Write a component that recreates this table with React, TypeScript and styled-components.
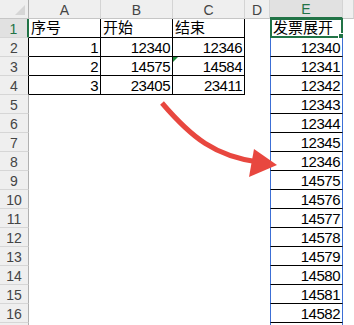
import styled, { createGlobalStyle } from "styled-components";

const GlobalStyle = createGlobalStyle`
  * { box-sizing: border-box; }
  html, body { margin: 0; padding: 0; background: #fff; }
  body { font-family: "Liberation Sans", "Noto Sans CJK SC", sans-serif; }
`;

const GREEN = "#217346";
const BLUE = "#3c6fd6";
const HEAD_BG = "#efefef";
const HEAD_ACTIVE = "#e1e1e1";

const Sheet = styled.div`
  position: relative;
  display: grid;
  grid-template-columns: 29px 72px 72px 72px 25px 73px 1fr;
  grid-template-rows: 19px repeat(17, 19px);
  width: 354px;
  height: 325px;
  overflow: hidden;
  background: #fff;
`;

const Corner = styled.div`
  background: ${HEAD_BG};
  border-right: 1px solid #b0b0b0;
  border-bottom: 1px solid #c6c6c6;
  display: flex;
  align-items: flex-end;
  justify-content: flex-end;
  padding: 0 3px 3px 0;
`;

const ColHead = styled.div<{ $active?: boolean }>`
  background: ${(p) => (p.$active ? HEAD_ACTIVE : HEAD_BG)};
  color: ${(p) => (p.$active ? GREEN : "#444")};
  border-right: 1px solid #d4d4d4;
  border-bottom: ${(p) => (p.$active ? `2px solid ${GREEN}` : "1px solid #c6c6c6")};
  font-size: 14px;
  display: flex;
  align-items: center;
  justify-content: center;
  padding-top: 1px;
`;

const RowHead = styled.div<{ $active?: boolean; $edge?: string }>`
  background: ${(p) => (p.$active ? HEAD_ACTIVE : HEAD_BG)};
  color: ${(p) => (p.$active ? GREEN : "#444")};
  border-right: ${(p) =>
    p.$active ? `2px solid ${GREEN}` : `1px solid ${p.$edge ?? "#b0b0b0"}`};
  border-bottom: 1px solid #d6d6d6;
  font-size: 14px;
  display: flex;
  align-items: center;
  justify-content: center;
  padding-top: 2px;
`;

const Cell = styled.div<{
  $right?: boolean;
  $cjk?: boolean;
  $lineLeft?: string;
  $lineRight?: string;
  $lineBottom?: string;
}>`
  position: relative;
  display: flex;
  align-items: flex-end;
  justify-content: ${(p) => (p.$right ? "flex-end" : "flex-start")};
  padding: 0 2px ${(p) => (p.$cjk ? "2px" : "1px")} 2px;
  border-left: ${(p) => (p.$lineLeft ? `1px solid ${p.$lineLeft}` : "none")};
  border-right: ${(p) => (p.$lineRight ? `1px solid ${p.$lineRight}` : "none")};
  border-bottom: ${(p) => (p.$lineBottom ? `1px solid ${p.$lineBottom}` : "none")};
  color: #000;
  font-size: 15px;
  line-height: 14px;
  letter-spacing: ${(p) => (p.$cjk ? "0" : "-0.5px")};
  white-space: nowrap;
`;

const ErrorMark = styled.span`
  position: absolute;
  top: 0;
  left: 0;
  width: 0;
  height: 0;
  border-top: 5px solid #1f8a3c;
  border-right: 5px solid transparent;
`;

const Selection = styled.div`
  position: absolute;
  top: -1px;
  left: -1px;
  right: -1px;
  bottom: -1px;
  border: 2px solid ${GREEN};
  pointer-events: none;
`;

const FillHandle = styled.span`
  position: absolute;
  right: -3px;
  bottom: -3px;
  width: 6px;
  height: 6px;
  background: ${GREEN};
  border: 1px solid #fff;
`;

const Overlay = styled.svg`
  position: absolute;
  left: 0;
  top: 0;
  pointer-events: none;
`;

const table: [string, string, string][] = [
  ["序号", "开始", "结束"],
  ["1", "12340", "12346"],
  ["2", "14575", "14584"],
  ["3", "23405", "23411"],
];

const expanded = [
  "12340", "12341", "12342", "12343", "12344", "12345", "12346",
  "14575", "14576", "14577", "14578", "14579", "14580", "14581", "14582",
];

const columns = ["A", "B", "C", "D", "E", ""];

export default function App() {
  // 16 visible rows plus a sliver of row 17 at the bottom edge
  const rows = Array.from({ length: 17 }, (_, i) => i + 1);

  return (
    <>
      <GlobalStyle />
      <Sheet>
        <Corner>
          <svg width="10" height="10" viewBox="0 0 10 10">
            <polygon points="10,0 10,10 0,10" fill="#d6d6d6" />
          </svg>
        </Corner>
        {columns.map((c) => (
          <ColHead key={c || "F"} $active={c === "E"}>
            {c}
          </ColHead>
        ))}

        {rows.map((r) => {
          const inTable = r <= 4;
          const data = inTable ? table[r - 1] : null;
          const header = r === 1;
          const sliver = r === 17;
          const eText = header ? "发票展开" : expanded[r - 2] ?? "";
          return [
            <RowHead
              key={`h${r}`}
              $active={header}
              $edge={inTable ? "#000" : undefined}
            >
              {sliver ? "" : r}
            </RowHead>,
            ...[0, 1, 2].map((ci) => (
              <Cell
                key={`c${r}-${ci}`}
                $right={!header}
                $cjk={header}
                $lineRight={inTable ? "#000" : undefined}
                $lineBottom={inTable ? "#000" : undefined}
              >
                {r === 3 && ci === 2 && <ErrorMark />}
                {data ? data[ci] : ""}
              </Cell>
            )),
            <Cell key={`d${r}`} />,
            <Cell
              key={`e${r}`}
              $right={!header}
              $cjk={header}
              $lineLeft={BLUE}
              $lineRight={BLUE}
              $lineBottom="#000"
            >
              {eText}
              {header && (
                <Selection>
                  <FillHandle />
                </Selection>
              )}
            </Cell>,
            <Cell key={`f${r}`} />,
          ];
        })}

        <Overlay width="354" height="325" viewBox="0 0 354 325">
          <path
            d="M162 103 C192 138 215 156 258 162"
            fill="none"
            stroke="#e8473f"
            strokeWidth="5"
          />
          <polygon points="254,149 277,165 249,177" fill="#e8473f" />
        </Overlay>
      </Sheet>
    </>
  );
}
